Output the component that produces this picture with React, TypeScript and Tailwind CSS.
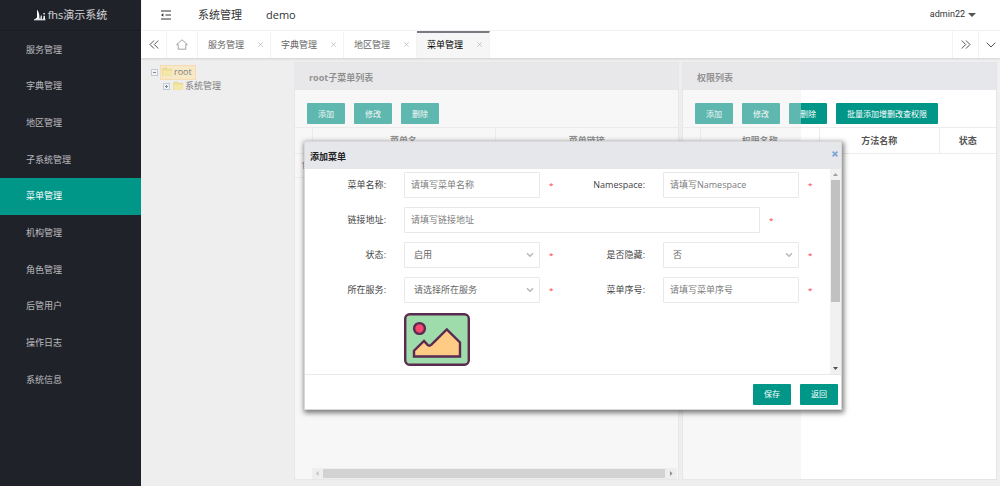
import { useState } from 'react';
import type { ReactNode } from 'react';
import clsx from 'clsx';

const menus = [
  '服务管理',
  '字典管理',
  '地区管理',
  '子系统管理',
  '菜单管理',
  '机构管理',
  '角色管理',
  '后管用户',
  '操作日志',
  '系统信息',
];

const tabs = ['服务管理', '字典管理', '地区管理', '菜单管理'];

function Logo() {
  return (
    <svg width="12" height="12" viewBox="0 0 12 12" fill="#fff">
      <path d="M3 0.5c1.9 2.4 2.6 5.4 2.4 8.5l0.8 1.5H0.5L3 8.6z" />
      <path d="M6.8 6.6h1v2.3l0.6 1.6H6.3z" />
      <path d="M9.4 4h1.4v1.4H9.4zM9.6 6.8h1.2l0.4 3.7H9.1z" />
      <path d="M0 10.3h11.4v1H0z" />
    </svg>
  );
}

function Folder() {
  return (
    <svg width="11" height="10" viewBox="0 0 11 10" className="shrink-0">
      <path d="M0.5 8.5V1.8L1.3 1h3l1 1.2h4.4v6.3z" fill="#f0d860" stroke="#dcc255" strokeWidth="0.6" />
      <path d="M0.6 8.8V3.8h9.4v5z" fill="#fae67c" />
    </svg>
  );
}

function Expander({ open }: { open?: boolean }) {
  return (
    <svg width="7" height="7" viewBox="0 0 7 7" className="shrink-0">
      <rect x="0.5" y="0.5" width="6" height="6" fill="#f4f7fa" stroke="#a9b8c8" />
      <path d={open ? 'M2 3.5h3' : 'M2 3.5h3M3.5 2v3'} stroke="#445" />
    </svg>
  );
}

function Button({ children }: { children: ReactNode }) {
  return (
    <button type="button" className="h-[21px] rounded-[1px] bg-[#009688] px-[11px] text-[8px] whitespace-nowrap text-white">
      {children}
    </button>
  );
}

function Panel({ title, children }: { title: string; children: ReactNode }) {
  return (
    <section className="flex min-w-0 flex-col overflow-hidden border border-[#e4e5e8] bg-white">
      <h2 className="h-[27px] shrink-0 bg-[#e6e7eb] pl-[14px] leading-[29px] font-bold text-[#555]">{title}</h2>
      {children}
    </section>
  );
}

function Field({ id, label, wide, children }: { id: string; label: string; wide?: boolean; children: ReactNode }) {
  return (
    <div className={clsx('flex h-[26px] items-center', wide && 'col-span-2')}>
      <label htmlFor={id} className="mr-[18px] w-[81px] shrink-0 text-right text-[#444]">
        {label}:
      </label>
      <div className="relative h-full min-w-0 flex-1">{children}</div>
      <span className={clsx('shrink-0 pl-[9px] text-[8px] text-[#ff3333]', wide ? 'w-[63px]' : 'w-6')}>*</span>
    </div>
  );
}

function TextInput({ id, placeholder }: { id: string; placeholder: string }) {
  return (
    <input
      id={id}
      placeholder={placeholder}
      className="h-full w-full rounded-[1px] border border-[#e8e8e8] bg-white pb-px pl-[6px] text-[#555] outline-none placeholder:text-[#7c7c7c]"
    />
  );
}

function Select({ id, options }: { id: string; options: string[] }) {
  return (
    <>
      <select id={id} className="h-full w-full appearance-none rounded-[1px] border border-[#e8e8e8] bg-white pl-[9px] text-[#666] outline-none">
        {options.map((o) => (
          <option key={o}>{o}</option>
        ))}
      </select>
      <svg width="8" height="6" viewBox="0 0 8 6" className="pointer-events-none absolute top-[10px] right-[6px]">
        <path d="M1 1.2l3 3 3-3" fill="none" stroke="#b5b5b5" strokeWidth="1.4" />
      </svg>
    </>
  );
}

function AddMenuDialog({ onClose }: { onClose: () => void }) {
  return (
    <div
      role="dialog"
      aria-label="添加菜单"
      className="absolute top-[83px] left-[163px] flex w-[538px] flex-col border border-[#d8d8d8] bg-white shadow-[1px_2px_5px_1px_rgba(0,0,0,0.5)]"
    >
      <div className="flex h-[27px] items-center justify-between bg-[#e6e7eb] pr-[3px] pl-[5px]">
        <h2 className="pt-[2px] font-bold text-[#222]">添加菜单</h2>
        <button type="button" aria-label="关闭" onClick={onClose} className="mb-1">
          <svg width="6" height="6" viewBox="0 0 6 6">
            <path d="M0.6 0.6l4.8 4.8M5.4 0.6L0.6 5.4" stroke="#7ba3d8" strokeWidth="1.6" />
          </svg>
        </button>
      </div>
      <div className="flex h-[206px] border-b border-[#e9e9e9]">
        <form className="grid flex-1 auto-rows-min grid-cols-2 gap-y-[9px] overflow-hidden pt-[3px] pr-[7px]">
          <Field id="name" label="菜单名称">
            <TextInput id="name" placeholder="请填写菜单名称" />
          </Field>
          <Field id="namespace" label="Namespace">
            <TextInput id="namespace" placeholder="请填写Namespace" />
          </Field>
          <Field id="url" label="链接地址" wide>
            <TextInput id="url" placeholder="请填写链接地址" />
          </Field>
          <Field id="state" label="状态">
            <Select id="state" options={['启用', '禁用']} />
          </Field>
          <Field id="hidden" label="是否隐藏">
            <Select id="hidden" options={['否', '是']} />
          </Field>
          <Field id="service" label="所在服务">
            <Select id="service" options={['请选择所在服务']} />
          </Field>
          <Field id="order" label="菜单序号">
            <TextInput id="order" placeholder="请填写菜单序号" />
          </Field>
          <svg width="66" height="53" viewBox="0 0 66 53" className="col-span-2 mt-px ml-[99px]" strokeLinejoin="round">
            <rect x="1.2" y="1.2" width="63.6" height="50.6" rx="4.5" fill="#9fdcab" stroke="#5a2a50" strokeWidth="2.4" />
            <circle cx="15.5" cy="15.5" r="5.4" fill="#f4486c" stroke="#5a2a50" strokeWidth="2.4" />
            <path
              d="M10 43.5v-5.8l10-9.7 3.6 3.9q1.7 1.5 3.6 0L42.8 16.5 56 29.5v14z"
              fill="#ffcb85"
              stroke="#5a2a50"
              strokeWidth="2.4"
              strokeLinejoin="miter"
            />
          </svg>
        </form>
        <div className="flex w-[11px] flex-col items-center bg-[#f1f1f1]">
          <svg width="9" height="11" viewBox="0 0 9 11">
            <path d="M2 7l2.5-3L7 7z" fill="#a3a3a3" />
          </svg>
          <div className="h-[122px] w-[9px] bg-[#c1c1c1]" />
          <svg width="9" height="11" viewBox="0 0 9 11" className="mt-auto">
            <path d="M2 4l2.5 3L7 4z" fill="#505050" />
          </svg>
        </div>
      </div>
      <div className="flex h-[34px] items-center justify-end gap-[9px] pt-1 pr-[3px]">
        <Button>保存</Button>
        <Button>返回</Button>
      </div>
    </div>
  );
}

export default function App() {
  const [active, setActive] = useState('菜单管理');
  const [dialogOpen, setDialogOpen] = useState(true);

  return (
    <div className="flex min-h-screen bg-[#f0f0f0] font-['Open_Sans','Noto_Sans_CJK_SC',sans-serif] text-[9px] text-[#666]">
      <aside className="w-[141px] shrink-0 bg-[#20222a]">
        <div className="flex h-[31px] items-center justify-center gap-[2px] border-b border-[#1b1d24] text-[11px] text-white/80">
          <Logo />
          fhs演示系统
        </div>
        <nav className="grid h-[367px] auto-rows-fr">
          {menus.map((m) => (
            <a
              key={m}
              href="#"
              onClick={() => setActive(m)}
              className={clsx('flex items-center pl-[26px]', m === active ? 'bg-[#009688] text-white' : 'text-white/70')}
            >
              {m}
            </a>
          ))}
        </nav>
      </aside>

      <main className="flex min-w-0 flex-1 flex-col">
        <header className="flex h-[31px] items-center border-b border-l border-[#f3f3f3] bg-white text-[11px] text-[#333]">
          <button type="button" aria-label="收起菜单" className="ml-[18px]">
            <svg width="12" height="10" viewBox="0 0 12 10" stroke="#333" strokeWidth="1.1">
              <path d="M1 1h10M5.5 5H11M1 9h10" />
              <path d="M1 5l2.4-1.7v3.4z" fill="#333" stroke="none" />
            </svg>
          </button>
          <a href="#" className="ml-[26px]">系统管理</a>
          <a href="#" className="ml-[24px]">demo</a>
          <button type="button" className="mr-[24px] ml-auto flex items-center gap-[3px] font-['Roboto',sans-serif] text-[9px]">
            admin22
            <svg width="8" height="4" viewBox="0 0 8 4">
              <path d="M0 0h8L4 4z" fill="#555" />
            </svg>
          </button>
        </header>

        <div className="z-10 flex h-[27px] bg-white shadow-[0_1px_2px_rgba(0,0,0,0.12)]">
          <button type="button" aria-label="向左" className="flex w-[26px] items-center justify-center border-r border-[#f3f3f3]">
            <svg width="10" height="9" viewBox="0 0 10 9" fill="none" stroke="#555">
              <path d="M5 0.5l-4 4 4 4M9.3 0.5l-4 4 4 4" />
            </svg>
          </button>
          <button type="button" aria-label="首页" className="flex w-[31px] items-center justify-center border-r border-[#f3f3f3]">
            <svg width="12" height="11" viewBox="0 0 12 11" fill="none" stroke="#999" strokeWidth="0.9">
              <path d="M0.6 5.6L6 0.8l5.4 4.8H9.8v4.6H2.2V5.6z" strokeLinejoin="round" />
            </svg>
          </button>
          {tabs.map((t) => (
            <div
              key={t}
              className={clsx(
                'flex w-[73px] items-center justify-between border-t-2 border-r border-r-[#f3f3f3] pr-[7px] pb-[2px] pl-[10px]',
                t === active ? 'border-t-[#797b82] bg-[#f6f6f6] text-black' : 'border-t-transparent',
              )}
            >
              <button type="button" onClick={() => setActive(t)}>{t}</button>
              <button type="button" aria-label="关闭">
                <svg width="5" height="5" viewBox="0 0 5 5">
                  <path d="M0.3 0.3l4.4 4.4M4.7 0.3L0.3 4.7" stroke="#bbb" strokeWidth="0.8" />
                </svg>
              </button>
            </div>
          ))}
          <button type="button" aria-label="向右" className="ml-auto flex w-[27px] items-center justify-center border-x border-[#f3f3f3]">
            <svg width="10" height="9" viewBox="0 0 10 9" fill="none" stroke="#555">
              <path d="M0.7 0.5l4 4-4 4M5 0.5l4 4-4 4" />
            </svg>
          </button>
          <button type="button" aria-label="更多" className="flex w-[21px] items-center justify-end pr-1">
            <svg width="10" height="6" viewBox="0 0 10 6" fill="none" stroke="#555">
              <path d="M0.7 0.7L5 5l4.3-4.3" />
            </svg>
          </button>
        </div>

        <div className="relative grid flex-1 grid-cols-[150px_385fr_315fr] gap-[3px] pt-1 pr-[3px] pb-[6px]">
          <ul className="pt-[3px] pl-[10px]">
            <li>
              <div className="flex h-[14px] items-center gap-[2px]">
                <Expander open />
                <a href="#" className="flex h-[15px] items-center gap-px border border-[#ffd28a] bg-[#ffe6b0] px-px pr-[3px] text-[#333]">
                  <Folder />
                  root
                </a>
              </div>
              <div className="flex h-[14px] items-center gap-[3px] pl-[12px]">
                <Expander />
                <a href="#" className="flex items-center gap-px text-[#333]">
                  <Folder />
                  系统管理
                </a>
              </div>
            </li>
          </ul>

          <Panel title="root子菜单列表">
            <div className="flex gap-[9px] px-3 pt-[13px] pb-[3px]">
              <Button>添加</Button>
              <Button>修改</Button>
              <Button>删除</Button>
            </div>
            <table className="w-full table-fixed border-y border-[#ececec] text-[#555]">
              <thead>
                <tr className="h-[26px] border-b border-[#ececec]">
                  <th className="w-[17px] border-r border-[#ececec]" />
                  <th className="border-r border-[#ececec]">菜单名</th>
                  <th>菜单链接</th>
                </tr>
              </thead>
              <tbody>
                <tr className="h-[24px]">
                  <td className="border-r border-[#ececec] text-center">1</td>
                  <td />
                  <td />
                </tr>
              </tbody>
            </table>
            <div className="mt-auto mr-px ml-[17px] flex h-[11px] items-center bg-[#f1f1f1]">
              <svg width="11" height="9" viewBox="0 0 11 9">
                <path d="M6.5 2v5L4 4.5z" fill="#a3a3a3" />
              </svg>
              <div className="h-[9px] flex-1 bg-[#c1c1c1]" />
              <svg width="12" height="9" viewBox="0 0 12 9">
                <path d="M5 2v5l2.5-2.5z" fill="#505050" />
              </svg>
            </div>
          </Panel>

          <Panel title="权限列表">
            <div className="flex gap-[9px] px-3 pt-[13px] pb-[3px]">
              <Button>添加</Button>
              <Button>修改</Button>
              <Button>删除</Button>
              <Button>批量添加增删改查权限</Button>
            </div>
            <table className="w-full table-fixed border-y border-[#ececec] text-[#555]">
              <thead>
                <tr className="h-[26px]">
                  <th className="w-[17px] border-r border-[#ececec]" />
                  <th className="border-r border-[#ececec]">权限名称</th>
                  <th className="border-r border-[#ececec]">方法名称</th>
                  <th className="w-[57px]">状态</th>
                </tr>
              </thead>
            </table>
          </Panel>

          {dialogOpen && (
            <>
              <div className="absolute inset-y-0 left-0 w-[660px] bg-[#ececec]/40" />
              <AddMenuDialog onClose={() => setDialogOpen(false)} />
            </>
          )}
        </div>
      </main>
    </div>
  );
}
